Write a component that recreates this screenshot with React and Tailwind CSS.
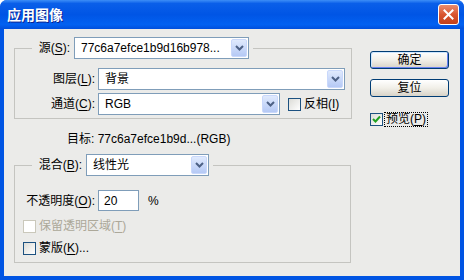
import React from 'react';

const Arrow = () => (
  <div className="ml-auto mr-[1px] flex h-[18px] w-[16px] items-center justify-center rounded-[2px] border border-[#c9d8fb] bg-linear-to-b from-[#e0eafd] to-[#b5c9f5]">
    <svg width="9" height="6" viewBox="0 0 9 6">
      <path d="M1 1 L4.5 4.5 L8 1" fill="none" stroke="#4d6185" strokeWidth="2" />
    </svg>
  </div>
);

const Combo = ({ value, className }) => (
  <div className={`flex h-[22px] items-center border border-[#7f9db9] bg-white ${className}`}>
    <span className="pl-[6px] leading-none whitespace-nowrap">{value}</span>
    <Arrow />
  </div>
);

const Check = ({ checked, disabled }) => (
  <div
    className={`flex h-[13px] w-[13px] shrink-0 items-center justify-center border ${
      disabled ? 'border-[#cac8bb] bg-white' : 'border-[#1c5180] bg-linear-to-br from-[#dcdcd7] to-white'
    }`}
  >
    {checked && (
      <svg width="9" height="9" viewBox="0 0 9 9">
        <path d="M1 4 L3.5 6.5 L8 1.5" fill="none" stroke="#21a121" strokeWidth="2" />
      </svg>
    )}
  </div>
);

const Key = ({ k }) => <u className="underline-offset-2">{k}</u>;

const XpButton = ({ children, isDefault }) => (
  <button
    className={`flex h-[18px] w-[79px] items-center justify-center rounded-[3px] border border-[#003c74] bg-linear-to-b from-white via-[#f1efe8] to-[#d8d3c8] leading-none ${
      isDefault ? 'shadow-[inset_1px_1px_0_#cee7ff,inset_-1px_-1px_0_#6982ee]' : ''
    }`}
  >
    {children}
  </button>
);

const App = () => {
  return (
    <div className="flex h-[280px] w-[464px] flex-col overflow-hidden rounded-t-[7px] bg-[#0054e3] font-['Liberation_Sans','Noto_Sans_CJK_SC',sans-serif] text-[12px] leading-[16px] text-black">
      <div className="flex h-[29px] shrink-0 items-center justify-between bg-[linear-gradient(to_bottom,#3d8ef7_0%,#0a5fe9_12%,#0055e5_50%,#0261f1_85%,#004fdc_100%)]">
        <span className="ml-[7px] text-[14px] font-bold text-white [text-shadow:1px_1px_0_#0b2490]">应用图像</span>
        <div className="mr-[5px] flex h-[21px] w-[21px] items-center justify-center rounded-[3px] border border-white bg-linear-to-b from-[#e88c6c] via-[#d9552f] to-[#c2401b]">
          <svg width="11" height="11" viewBox="0 0 11 11">
            <path d="M1.5 1.5 L9.5 9.5 M9.5 1.5 L1.5 9.5" stroke="white" strokeWidth="2" strokeLinecap="square" />
          </svg>
        </div>
      </div>

      <div className="mx-[4px] mb-[4px] flex flex-1 bg-[#ebebe9]">
        <div className="pl-[10px] pt-[8px]">
          <fieldset className="w-[338px] border border-[#c4c4c0] pb-[3px] pt-[9px]">
            <legend className="ml-[17px] flex items-center px-[4px]">
              <span className="w-[34px] text-right">
                源(<Key k="S" />):
              </span>
              <Combo value="77c6a7efce1b9d16b978..." className="ml-[4px] w-[175px]" />
            </legend>
            <div className="flex items-center">
              <span className="w-[80px] text-right">
                图层(<Key k="L" />):
              </span>
              <Combo value="背景" className="ml-[3px] w-[247px]" />
            </div>
            <div className="mt-[3px] flex items-center">
              <span className="w-[80px] text-right">
                通道(<Key k="C" />):
              </span>
              <Combo value="RGB" className="ml-[3px] w-[182px]" />
              <div className="ml-[8px]">
                <Check />
              </div>
              <span className="ml-[3px]">
                反相(<Key k="I" />)
              </span>
            </div>
          </fieldset>

          <div className="ml-[53px] mt-[12px]">目标: 77c6a7efce1b9d...(RGB)</div>

          <fieldset className="mt-[7px] w-[337px] border border-[#c4c4c0] pb-[6px] pt-[14px]">
            <legend className="ml-[17px] flex items-center px-[4px]">
              <span className="w-[46px] text-right">
                混合(<Key k="B" />):
              </span>
              <Combo value="线性光" className="ml-[4px] w-[123px]" />
            </legend>
            <div className="flex items-center">
              <span className="w-[80px] text-right">
                不透明度(<Key k="O" />):
              </span>
              <div className="ml-[3px] flex h-[21px] w-[41px] items-center border border-[#7f9db9] bg-white pl-[5px]">20</div>
              <span className="ml-[9px]">%</span>
            </div>
            <div className="ml-[8px] mt-[7px] flex h-[16px] items-center">
              <Check disabled />
              <span className="ml-[3px] text-[#aca899]">
                保留透明区域(<Key k="T" />)
              </span>
            </div>
            <div className="ml-[8px] mt-[6px] flex h-[16px] items-center">
              <Check />
              <span className="ml-[3px]">
                蒙版(<Key k="K" />)...
              </span>
            </div>
          </fieldset>
        </div>

        <div className="ml-[18px] flex flex-col pt-[22px]">
          <XpButton isDefault>确定</XpButton>
          <div className="mt-[10px]">
            <XpButton>复位</XpButton>
          </div>
          <div className="mt-[15px] flex items-center">
            <Check checked />
            <span className="ml-[1px] border border-dotted border-black px-[1px] leading-[13px]">
              预览(<Key k="P" />)
            </span>
          </div>
        </div>
      </div>
    </div>
  );
};

export default App;
